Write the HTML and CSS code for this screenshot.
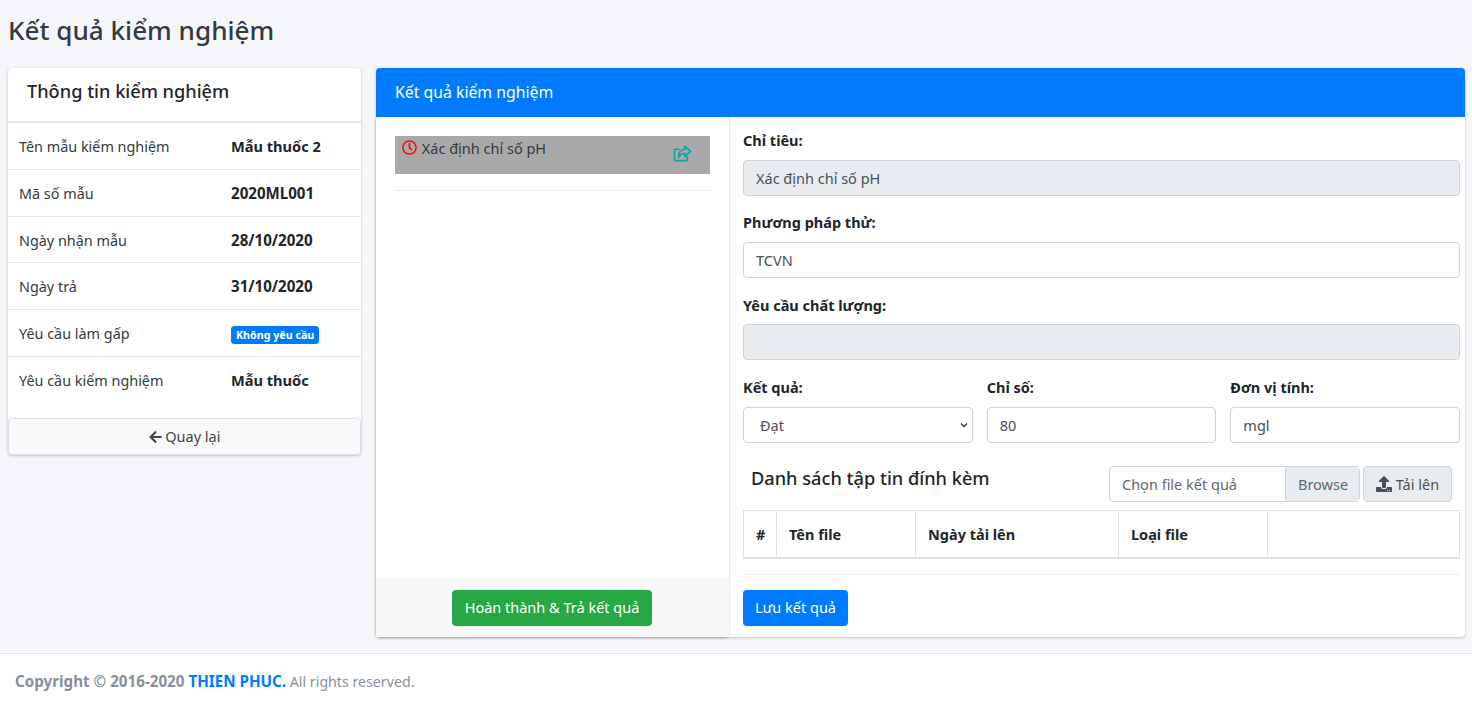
FILE: index.html
```html
<!DOCTYPE html>
<html lang="vi">
<head>
<meta charset="utf-8">
<title>Kết quả kiểm nghiệm</title>
<link rel="stylesheet" href="styles.css">
</head>
<body>
<main class="content">
  <h1 class="page-title">Kết quả kiểm nghiệm</h1>
  <div class="layout">
    <section class="card info-card">
      <h2 class="info-title">Thông tin kiểm nghiệm</h2>
      <dl class="info-list">
        <div class="info-row"><dt>Tên mẫu kiểm nghiệm</dt><dd>Mẫu thuốc 2</dd></div>
        <div class="info-row"><dt>Mã số mẫu</dt><dd class="num">2020ML001</dd></div>
        <div class="info-row"><dt>Ngày nhận mẫu</dt><dd class="num">28/10/2020</dd></div>
        <div class="info-row"><dt>Ngày trả</dt><dd class="num">31/10/2020</dd></div>
        <div class="info-row"><dt>Yêu cầu làm gấp</dt><dd><span class="badge">Không yêu cầu</span></dd></div>
        <div class="info-row info-row-last"><dt>Yêu cầu kiểm nghiệm</dt><dd>Mẫu thuốc</dd></div>
      </dl>
      <a class="back-btn" href="#">
        <svg class="icon" viewBox="0 0 448 512" width="13" height="14"><path fill="currentColor" d="M257.5 445.1l-22.2 22.2c-9.4 9.4-24.6 9.400-33.900 0L7 273c-9.400-9.400-9.400-24.600 0-33.900L201.400 44.700c9.400-9.400 24.600-9.400 33.900 0l22.200 22.200c9.500 9.500 9.300 25-.4 34.300L136.600 216H424c13.300 0 24 10.700 24 24v32c0 13.300-10.700 24-24 24H136.600l120.500 114.800c9.800 9.300 10 24.800.4 34.300z"/></svg>
        Quay lại
      </a>
    </section>

    <section class="card result-card">
      <header class="result-header">Kết quả kiểm nghiệm</header>
      <div class="result-body">
        <aside class="criteria-panel">
          <div class="criteria-list">
            <div class="criteria-item">
              <span class="criteria-name">
                <svg class="clock" viewBox="0 0 512 512" width="15" height="15"><path fill="currentColor" d="M256 8C119 8 8 119 8 256s111 248 248 248 248-111 248-248S393 8 256 8zm0 448c-110.500 0-200-89.500-200-200S145.500 56 256 56s200 89.500 200 200-89.500 200-200 200zm61.800-104.400l-84.900-61.700c-3.100-2.300-4.900-5.900-4.900-9.700V116c0-6.600 5.400-12 12-12h32c6.600 0 12 5.400 12 12v141.700l66.800 48.600c5.400 3.900 6.500 11.400 2.600 16.800L334.600 349c-3.900 5.300-11.400 6.500-16.800 2.600z"/></svg>
                Xác định chỉ số pH
              </span>
              <svg class="share" viewBox="0 0 20 18" width="19" height="17"><path fill="none" stroke="currentColor" stroke-width="1.8" stroke-linejoin="round" stroke-linecap="round" d="M15 12.500V15.500a1 1 0 0 1-1 1H2.500a1 1 0 0 1-1-1V5.500a1 1 0 0 1 1-1H6"/><path fill="none" stroke="currentColor" stroke-width="1.800" stroke-linejoin="round" d="M12.500 1.500 18.500 6.800 12.500 12V9C9 9 7 10 6 13 5.500 8 8 5 12.500 4.500z"/></svg>
            </div>
            <hr class="divider">
          </div>
          <div class="criteria-footer">
            <button class="btn btn-green" type="button">Hoàn thành &amp; Trả kết quả</button>
          </div>
        </aside>

        <form class="result-form">
          <div class="field">
            <label>Chỉ tiêu:</label>
            <input class="control" type="text" value="Xác định chỉ số pH" disabled>
          </div>
          <div class="field">
            <label>Phương pháp thử:</label>
            <input class="control" type="text" value="TCVN">
          </div>
          <div class="field">
            <label>Yêu cầu chất lượng:</label>
            <input class="control" type="text" disabled>
          </div>
          <div class="field-row">
            <div class="field">
              <label>Kết quả:</label>
              <select class="control control-select"><option>Đạt</option></select>
            </div>
            <div class="field">
              <label>Chỉ số:</label>
              <input class="control" type="text" value="80">
            </div>
            <div class="field">
              <label>Đơn vị tính:</label>
              <input class="control" type="text" value="mgl">
            </div>
          </div>
          <div class="files-bar">
            <h3 class="files-title">Danh sách tập tin đính kèm</h3>
            <div class="file-picker">
              <span class="file-text">Chọn file kết quả</span>
              <span class="file-browse">Browse</span>
            </div>
            <button class="btn btn-upload" type="button">
              <svg class="icon" viewBox="0 0 512 512" width="16" height="16"><path fill="currentColor" d="M296 384h-80c-13.300 0-24-10.700-24-24V192h-87.700c-17.800 0-26.700-21.500-14.100-34.100L242.300 5.700c7.500-7.500 19.800-7.500 27.300 0l152.200 152.200c12.600 12.600 3.700 34.100-14.100 34.100H320v168c0 13.300-10.700 24-24 24zm216-8v112c0 13.300-10.700 24-24 24H24c-13.300 0-24-10.700-24-24V376c0-13.300 10.700-24 24-24h136v8c0 30.900 25.100 56 56 56h80c30.900 0 56-25.100 56-56v-8h136c13.300 0 24 10.700 24 24zm-124 88c0-11-9-20-20-20s-20 9-20 20 9 20 20 20 20-9 20-20zm64 0c0-11-9-20-20-20s-20 9-20 20 9 20 20 20 20-9 20-20z"/></svg>
              Tải lên
            </button>
          </div>
          <table class="files-table">
            <thead>
              <tr>
                <th class="col-num">#</th>
                <th class="col-name">Tên file</th>
                <th class="col-date">Ngày tải lên</th>
                <th class="col-type">Loại file</th>
                <th></th>
              </tr>
            </thead>
          </table>
          <hr class="divider form-divider">
          <button class="btn btn-blue" type="button">Lưu kết quả</button>
        </form>
      </div>
    </section>
  </div>
</main>
<footer class="page-footer"><strong>Copyright © 2016-2020 <a href="#">THIEN PHUC.</a></strong> All rights reserved.</footer>
</body>
</html>
```
FILE: styles.css
```css
* { box-sizing: border-box; }
html, body { margin: 0; padding: 0; }
body {
  background: #f4f6f9;
  color: #212529;
  font-family: "Noto Sans", "Open Sans", sans-serif;
  font-size: 14.5px;
  line-height: 21.75px;
  min-height: 708px;
  display: flex;
  flex-direction: column;
}
.content { flex: 1; padding: 0 7px 16px 8px; }
.page-title {
  margin: 0;
  height: 68px;
  padding-top: 10px;
  font-size: 26.100px;
  font-weight: 500;
  line-height: 40px;
  color: #343a40;
}
.layout { display: flex; align-items: flex-start; gap: 15px; }
.card {
  background: #fff;
  border-radius: 4px;
  box-shadow: 0 0 1px rgba(0, 0, 0, .125), 0 1px 3px rgba(0, 0, 0, .2);
}
.info-card { width: 353px; flex: none; }
.info-title {
  margin: 0;
  height: 55px;
  padding: 8px 19px 0;
  font-size: 18.200px;
  font-weight: 500;
  line-height: 30px;
  border-bottom: 2px solid #e3e5e7;
}
.info-list { margin: 0; padding-bottom: 15px; }
.info-row {
  display: grid;
  grid-template-columns: 212px 1fr;
  padding: 13px 11px 11px;
  border-bottom: 1px solid #e5e7ea;
}
.info-row-last { border-bottom: 0; }
.info-row dt { color: #343a40; font-size: 14.400px; font-weight: 400; }
.info-row dd { margin: 0; font-weight: 700; font-size: 14.600px; }
.info-row dd.num { font-size: 15.100px; }
.badge {
  display: inline-block;
  padding: 2px 5px;
  background: #007bff;
  color: #fff;
  border-radius: 3.500px;
  font-size: 10.700px;
  font-weight: 700;
  line-height: 14px;
  vertical-align: 0;
}
.back-btn {
  display: block;
  height: 37px;
  line-height: 35px;
  text-align: center;
  color: #444;
  text-decoration: none;
  background: #f8f9fa;
  border: 1px solid #dddfe2;
  border-radius: 4px;
}
.icon { vertical-align: -2px; }
.result-card { flex: 1; min-width: 0; }
.result-header {
  height: 49px;
  padding: 0 19px;
  line-height: 49px;
  background: #007bff;
  color: #fff;
  font-size: 15.800px;
  border-radius: 4px 4px 0 0;
}
.result-body { display: flex; height: 520px; }
.criteria-panel {
  width: 353px;
  flex: none;
  display: flex;
  flex-direction: column;
  border-radius: 4px;
  box-shadow: 0 0 1px rgba(0, 0, 0, .125), 0 1px 3px rgba(0, 0, 0, .2);
}
.criteria-list { flex: 1; padding: 19px 19px 0; }
.criteria-item {
  height: 38px;
  padding: 2px 7px 0;
  background: #a9a9a9;
  color: #343a40;
  display: flex;
  justify-content: space-between;
}
.clock { color: #f00; vertical-align: -1px; margin-right: 1px; }
.share { color: #17a2a2; margin: 7px 11px 0 0; }
.divider { margin: 16px 0 0; border: 0; border-top: 1px solid #eceef0; }
.criteria-footer {
  height: 59px;
  padding: 12px 1px 0 0;
  text-align: center;
  background: #f7f7f7;
}
.btn {
  height: 36px;
  padding: 0 13px;
  border: 1px solid transparent;
  border-radius: 4px;
  font: inherit;
  color: #fff;
  white-space: nowrap;
}
.btn-green { width: 200px; padding: 0; background: #28a745; }
.btn-blue { width: 105px; padding: 0; background: #007bff; }
.result-form { flex: 1; min-width: 0; padding: 13px 5px 0 14px; }
.field { margin-bottom: 16.500px; min-width: 0; }
label { display: block; margin-bottom: 8px; font-weight: 700; }
.control {
  display: block;
  width: 100%;
  height: 36px;
  padding: 6px 12px;
  font: inherit;
  color: #495057;
  background: #fff;
  border: 1px solid #ced4da;
  border-radius: 4px;
}
.control:disabled { background: #e9ecef; }
.control-select {
  appearance: none;
  padding: 7px 12px 5px 16px;
  background-image: url("data:image/svg+xml,%3Csvg xmlns='http://www.w3.org/2000/svg' viewBox='0 0 8 6'%3E%3Cpath d='M1 1.500 4 4.500 7 1.500' fill='none' stroke='%23333' stroke-width='1.300'/%3E%3C/svg%3E");
  background-repeat: no-repeat;
  background-position: right 4px center;
  background-size: 8px 6px;
}
.field-row {
  display: grid;
  grid-template-columns: repeat(3, 1fr);
  gap: 14px;
}
.files-bar { display: flex; align-items: flex-start; padding: 7px 8px 0; height: 51px; }
.files-title {
  flex: 1;
  margin: 0;
  font-size: 18.200px;
  font-weight: 500;
  line-height: 24px;
}
.file-picker {
  display: flex;
  width: 251px;
  height: 36px;
  border: 1px solid #ced4da;
  border-radius: 4px;
  color: #5f6870;
  line-height: 34px;
}
.file-text { flex: 1; padding-left: 12px; background: #fff; border-radius: 4px 0 0 4px; }
.file-browse { width: 74px; padding-left: 12px; background: #e9ecef; border-left: 1px solid #ced4da; }
.btn-upload {
  width: 89px;
  margin-left: 3px;
  padding: 1px 0 0;
  background: #e9ecef;
  border-color: #ced4da;
  color: #495057;
}
.files-table {
  width: 100%;
  border-collapse: collapse;
  table-layout: fixed;
}
.files-table th {
  height: 47px;
  padding: 2px 12px 0;
  text-align: left;
  font-weight: 700;
  border: 1px solid #dee2e6;
  border-bottom-width: 2px;
}
.col-num { width: 33px; }
.col-name { width: 139px; }
.col-date { width: 203px; }
.col-type { width: 149px; }
.form-divider { margin: 15px 0; }
.page-footer {
  height: 55px;
  padding: 0 15px;
  line-height: 55px;
  background: #fff;
  border-top: 1px solid #dee2e6;
  color: #869099;
  font-size: 14.200px;
}
.page-footer strong { font-size: 15.200px; }
.page-footer a { color: #007bff; text-decoration: none; }
```
